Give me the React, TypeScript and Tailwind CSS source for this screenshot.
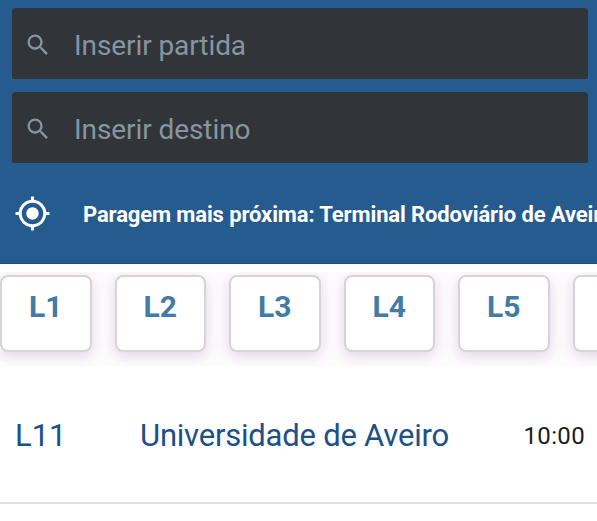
const searchFields = ["Inserir partida", "Inserir destino"];
const lines = ["L1", "L2", "L3", "L4", "L5", "L6"];

function SearchIcon() {
  return (
    <svg viewBox="0 0 24 24" className="mt-[2.5px] size-7 shrink-0 fill-[#8795a1]">
      <path d="M15.5 14h-.79l-.28-.27A6.471 6.471 0 0 0 16 9.5 6.5 6.5 0 1 0 9.5 16c1.61 0 3.09-.59 4.23-1.57l.27.28v.79l5 4.99L20.49 19l-4.99-5zm-6 0C7.01 14 5 11.99 5 9.5S7.01 5 9.5 5 14 7.01 14 9.5 11.99 14 9.5 14z" />
    </svg>
  );
}

function LocationIcon() {
  return (
    <svg viewBox="0 0 24 24" className="size-[37px] shrink-0 fill-white">
      <path d="M12 8c-2.21 0-4 1.79-4 4s1.79 4 4 4 4-1.79 4-4-1.79-4-4-4zm8.94 3A8.994 8.994 0 0 0 13 3.06V1h-2v2.06A8.994 8.994 0 0 0 3.06 11H1v2h2.06A8.994 8.994 0 0 0 11 20.94V23h2v-2.06A8.994 8.994 0 0 0 20.94 13H23v-2h-2.06zM12 19c-3.87 0-7-3.13-7-7s3.13-7 7-7 7 3.13 7 7-3.13 7-7 7z" />
    </svg>
  );
}

export default function App() {
  return (
    <div className="h-[521px] w-[597px] overflow-hidden bg-white font-['Roboto',sans-serif]">
      <header className="h-[264px] border-b border-[#1a4f86] bg-[#255b8e] pt-[7.5px]">
        <div className="flex flex-col gap-[12.5px] pr-[9px] pl-3">
          {searchFields.map((label) => (
            <div
              key={label}
              className="flex h-[71.5px] items-center rounded-t-[4px] rounded-b-[2px] bg-[#313438] pl-3"
            >
              <SearchIcon />
              <span className="ml-[22px] pt-[5px] text-[28px] leading-8 tracking-[-0.08px] whitespace-nowrap text-[#8795a1]">
                {label}
              </span>
            </div>
          ))}
        </div>
        <div className="mt-[31.5px] flex h-[37px] items-center pl-[14px]">
          <LocationIcon />
          <p className="ml-8 pt-0.5 text-[22px] font-bold tracking-[-0.12px] whitespace-nowrap text-white">
            Paragem mais próxima: Terminal Rodoviário de Aveiro
          </p>
        </div>
      </header>

      <nav className="mt-2 flex h-[94px] gap-[23px] overflow-hidden bg-[#fdfcfd] pt-[3px]">
        {lines.map((line) => (
          <div
            key={line}
            className="flex h-[77px] w-[91.5px] shrink-0 justify-center rounded-[8px] border-2 border-[#d5d4d6] bg-white pt-3 text-[30px] leading-9 font-bold text-[#417ba6] shadow-[0_4px_14px_rgba(90,20,110,0.17)]"
          >
            {line}
          </div>
        ))}
      </nav>

      <div className="flex h-[138px] items-center border-b-2 border-[#e2e2e2] pt-1 text-[#1b5089]">
        <span className="w-[125px] pt-px pl-[15px] text-[31px]">L11</span>
        <span className="flex-1 pt-px pl-[15px] text-[31px] tracking-[-0.22px] whitespace-nowrap">
          Universidade de Aveiro
        </span>
        <span className="pr-3 text-2xl tracking-[0.35px] text-[#1c1c1c]">10:00</span>
      </div>
    </div>
  );
}
